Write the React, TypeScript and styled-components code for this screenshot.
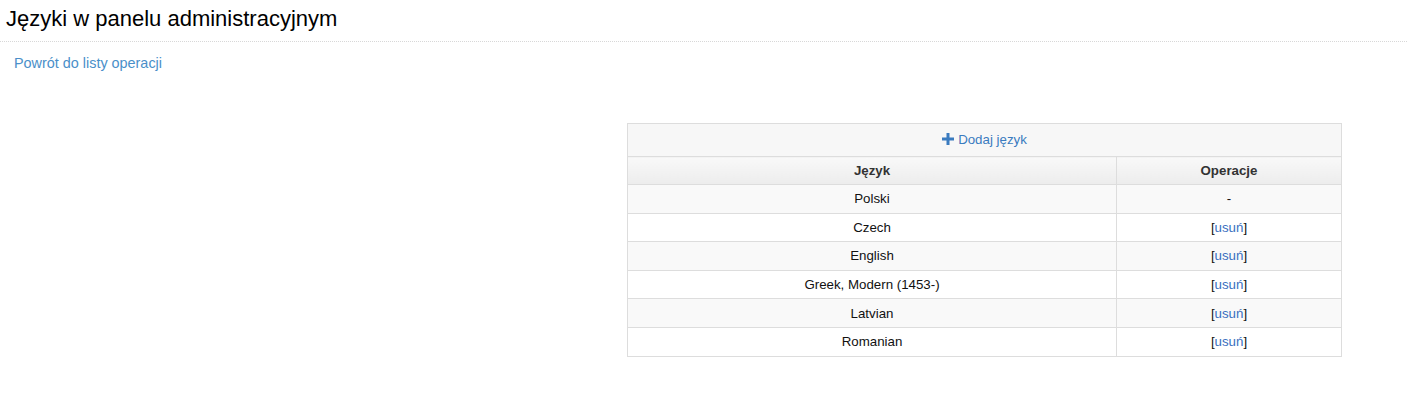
import styled, { createGlobalStyle } from "styled-components";

const GlobalStyle = createGlobalStyle`
  body {
    margin: 0;
    background: #fff;
    font-family: "Liberation Sans", Arial, sans-serif;
    color: #000;
  }
`;

const languages = ["Polski", "Czech", "English", "Greek, Modern (1453-)", "Latvian", "Romanian"];

const App = () => {
  return (
    <Page>
      <GlobalStyle />
      <Title>Języki w panelu administracyjnym</Title>
      <Content>
        <BackLink href="#">Powrót do listy operacji</BackLink>
        <TableWrap>
          <Table>
            <thead>
              <tr>
                <AddCell colSpan={2}>
                  <AddLink href="#">
                    <PlusIcon viewBox="0 0 12 12">
                      <path d="M4.5 0h3v4.5H12v3H7.5V12h-3V7.5H0v-3h4.5z" />
                    </PlusIcon>
                    Dodaj język
                  </AddLink>
                </AddCell>
              </tr>
              <tr>
                <HeadCell $wide>Język</HeadCell>
                <HeadCell>Operacje</HeadCell>
              </tr>
            </thead>
            <tbody>
              {languages.map((lang, i) => (
                <Row key={lang} $striped={i % 2 === 0}>
                  <Cell>{lang}</Cell>
                  <Cell>
                    {i === 0 ? (
                      "-"
                    ) : (
                      <>
                        [<RemoveLink href="#">usuń</RemoveLink>]
                      </>
                    )}
                  </Cell>
                </Row>
              ))}
            </tbody>
          </Table>
        </TableWrap>
      </Content>
    </Page>
  );
};

export default App;

const Page = styled.div`
  width: 1407px;
  height: 405px;
  overflow: hidden;
`;

const Title = styled.h1`
  margin: 0;
  padding: 5px 6px 0;
  height: 36px;
  font-size: 22px;
  font-weight: normal;
  line-height: 27px;
  border-bottom: 1px dotted #d8d8d8;
`;

const Content = styled.div`
  padding: 12px 14px 0;
`;

const BackLink = styled.a`
  display: block;
  font-size: 14.4px;
  line-height: 18px;
  color: #4a8fc9;
  text-decoration: none;
`;

const TableWrap = styled.div`
  margin: 51px 0 0 613px;
  width: 715px;
`;

const Table = styled.table`
  width: 100%;
  border-collapse: collapse;
  font-size: 13.3px;
  text-align: center;
`;

const AddCell = styled.th`
  height: 32px;
  padding: 0;
  background: #f7f7f7;
  border: 1px solid #dddddd;
  font-weight: normal;
`;

const AddLink = styled.a`
  color: #3a7bbf;
  text-decoration: none;
  display: inline-flex;
  align-items: center;
  gap: 4px;
`;

const PlusIcon = styled.svg`
  width: 12px;
  height: 12px;
  fill: #3a7bbf;
`;

const HeadCell = styled.th<{ $wide?: boolean }>`
  height: 27px;
  padding: 0;
  width: ${(p) => (p.$wide ? "488px" : "auto")};
  background: linear-gradient(#f9f9f9, #ececec);
  border: 1px solid #dddddd;
  color: #333;
  font-weight: bold;
`;

const Row = styled.tr<{ $striped: boolean }>`
  background: ${(p) => (p.$striped ? "#f9f9f9" : "#fff")};
`;

const Cell = styled.td`
  height: 27.6px;
  padding: 0;
  border: 1px solid #dddddd;
  color: #111;
`;

const RemoveLink = styled.a`
  color: #3a6fc0;
  text-decoration: none;
`;
